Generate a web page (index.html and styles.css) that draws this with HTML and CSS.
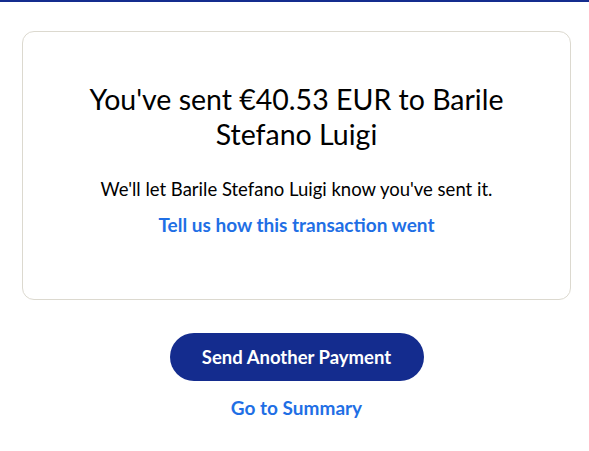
FILE: index.html
```html
<!DOCTYPE html>
<html lang="en">
<head>
<meta charset="utf-8">
<link rel="stylesheet" href="styles.css">
</head>
<body>
<div class="topbar"></div>
<main class="page">
  <section class="card">
    <h1 class="title">You've sent €40.53 EUR to Barile Stefano Luigi</h1>
    <p class="note">We'll let Barile Stefano Luigi know you've sent it.</p>
    <a class="link feedback" href="#">Tell us how this transaction went</a>
  </section>
  <div class="actions">
    <button class="primary">Send Another Payment</button>
    <a class="link summary" href="#">Go to Summary</a>
  </div>
</main>
</body>
</html>
```
FILE: styles.css
```css
html, body {
  margin: 0;
  padding: 0;
  background: #fff;
}
body {
  font-family: Lato, "Open Sans", sans-serif;
  color: #001435;
}
.topbar {
  height: 2px;
  background: #142c8e;
}
.page {
  padding: 29px 18px 0 22px;
  display: flex;
  flex-direction: column;
  align-items: center;
}
.card {
  box-sizing: border-box;
  width: 100%;
  height: 269px;
  border: 1px solid #dcd9cf;
  border-radius: 12px;
  display: flex;
  flex-direction: column;
  align-items: center;
  padding: 50px 40px 0;
}
.title {
  margin: 0;
  font-size: 28.5px;
  font-weight: 400;
  line-height: 35px;
  text-align: center;
  color: #000;
  max-width: 440px;
}
.note {
  margin: 25px 0 0;
  font-size: 18.5px;
  line-height: 24px;
  color: #000;
}
.link {
  color: #1f6fe5;
  font-weight: 700;
  text-decoration: none;
  font-size: 19px;
  line-height: 24px;
}
.feedback {
  margin-top: 12px;
}
.actions {
  margin-top: 33px;
  display: flex;
  flex-direction: column;
  align-items: center;
}
.primary {
  width: 254px;
  height: 48px;
  padding: 0;
  border: 0;
  border-radius: 24px;
  background: #142c8e;
  color: #fff;
  font-family: inherit;
  font-size: 18.5px;
  font-weight: 700;
}
.summary {
  margin-top: 15px;
}
```
